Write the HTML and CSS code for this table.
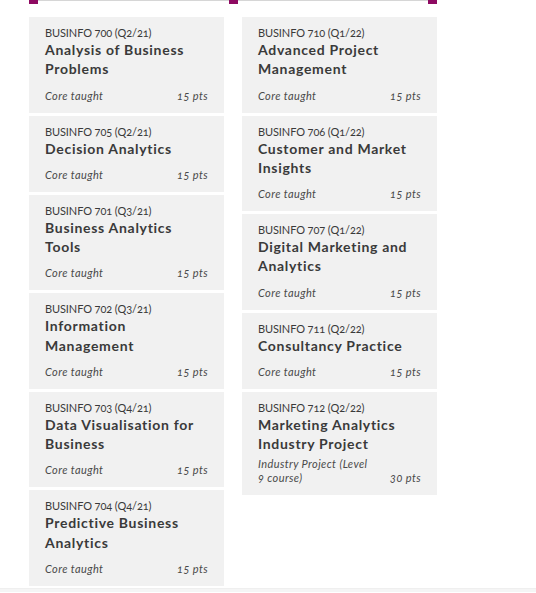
FILE: index.html
```html
<!DOCTYPE html>
<html lang="en">
<head>
<meta charset="utf-8">
<title>Courses</title>
<link rel="stylesheet" href="styles.css">
</head>
<body>
<div class="page">
  <div class="timeline">
    <span class="mark"></span><span class="rule"></span><span class="mark"></span><span class="rule"></span><span class="mark"></span>
  </div>
  <div class="columns">
    <div class="col">
      <div class="card"><div class="code">BUSINFO 700 (Q2/21)</div><div class="title">Analysis of Business Problems</div><div class="meta"><span class="type">Core taught</span><span class="pts">15 pts</span></div></div>
      <div class="card"><div class="code">BUSINFO 705 (Q2/21)</div><div class="title">Decision Analytics</div><div class="meta"><span class="type">Core taught</span><span class="pts">15 pts</span></div></div>
      <div class="card"><div class="code">BUSINFO 701 (Q3/21)</div><div class="title">Business Analytics Tools</div><div class="meta"><span class="type">Core taught</span><span class="pts">15 pts</span></div></div>
      <div class="card"><div class="code">BUSINFO 702 (Q3/21)</div><div class="title">Information Management</div><div class="meta"><span class="type">Core taught</span><span class="pts">15 pts</span></div></div>
      <div class="card"><div class="code">BUSINFO 703 (Q4/21)</div><div class="title">Data Visualisation for Business</div><div class="meta"><span class="type">Core taught</span><span class="pts">15 pts</span></div></div>
      <div class="card"><div class="code">BUSINFO 704 (Q4/21)</div><div class="title">Predictive Business Analytics</div><div class="meta"><span class="type">Core taught</span><span class="pts">15 pts</span></div></div>
    </div>
    <div class="col">
      <div class="card"><div class="code">BUSINFO 710 (Q1/22)</div><div class="title">Advanced Project Management</div><div class="meta"><span class="type">Core taught</span><span class="pts">15 pts</span></div></div>
      <div class="card"><div class="code">BUSINFO 706 (Q1/22)</div><div class="title">Customer and Market Insights</div><div class="meta"><span class="type">Core taught</span><span class="pts">15 pts</span></div></div>
      <div class="card"><div class="code">BUSINFO 707 (Q1/22)</div><div class="title">Digital Marketing and Analytics</div><div class="meta"><span class="type">Core taught</span><span class="pts">15 pts</span></div></div>
      <div class="card"><div class="code">BUSINFO 711 (Q2/22)</div><div class="title">Consultancy Practice</div><div class="meta"><span class="type">Core taught</span><span class="pts">15 pts</span></div></div>
      <div class="card"><div class="code">BUSINFO 712 (Q2/22)</div><div class="title">Marketing Analytics Industry Project</div><div class="meta"><span class="type wrap">Industry Project (Level 9 course)</span><span class="pts">30 pts</span></div></div>
    </div>
  </div>
</div>
<div class="footer"></div>
</body>
</html>
```
FILE: styles.css
```css
html, body {
  margin: 0;
  padding: 0;
  background: #ffffff;
}
body {
  font-family: Lato, "Open Sans", sans-serif;
  color: #3a3a3a;
  font-variant-numeric: oldstyle-nums;
  font-feature-settings: "onum" 1;
}
.page {
  padding: 0 0 2px 29px;
  width: 408px;
}
.timeline {
  display: flex;
  align-items: flex-start;
  height: 4px;
}
.mark {
  width: 9px;
  height: 4px;
  background: #8e0a62;
  flex: none;
}
.rule {
  flex: 1;
  height: 1px;
  background: #d6d6d6;
}
.columns {
  display: grid;
  grid-template-columns: 195px 195px;
  column-gap: 18px;
  margin-top: 13px;
  align-items: start;
}
.col {
  display: flex;
  flex-direction: column;
  gap: 3px;
}
.card {
  background: #f1f1f1;
  padding: 9px 16px 9.7px;
}
.code {
  font-size: 11px;
  line-height: 14px;
  color: #3a3a3a;
  letter-spacing: -0.1px;
}
.title {
  font-size: 14px;
  font-weight: 700;
  line-height: 19.4px;
  letter-spacing: 0.7px;
  color: #3a3a3a;
  margin-bottom: 4px;
}
.meta {
  display: flex;
  justify-content: space-between;
  align-items: flex-end;
  min-height: 20px;
  font-size: 11px;
  line-height: 14px;
  letter-spacing: 0.4px;
  font-style: italic;
  color: #4a4a4a;
}
.type.wrap {
  max-width: 116px;
}
.footer {
  height: 3px;
  background: #f5f5f5;
  border-top: 1px solid #efefef;
}
```
